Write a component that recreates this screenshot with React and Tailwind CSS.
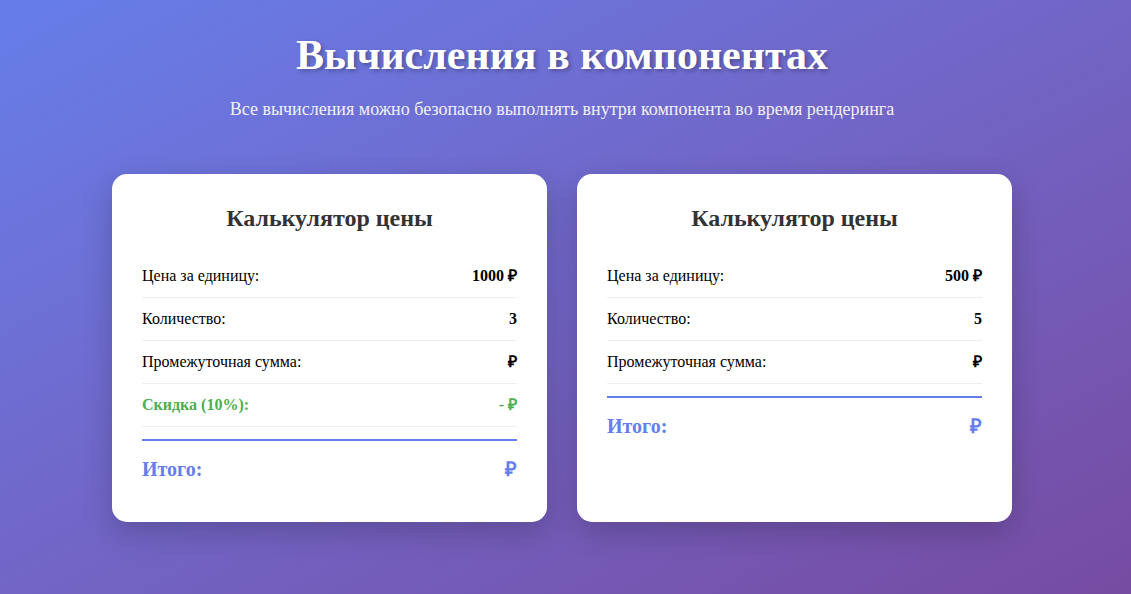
import React from 'react';

const calculators = [
  { id: 1, price: 1000, quantity: 3, discount: true },
  { id: 2, price: 500, quantity: 5, discount: false },
];

const Row = ({ label, value, green }) => (
  <div
    className={`flex justify-between items-center py-3 border-b border-[#eeeeee] text-base leading-[18px] ${
      green ? 'text-[#4caf50] font-bold' : 'text-black'
    }`}
  >
    <span>{label}</span>
    <span className="font-bold">{value}</span>
  </div>
);

const PriceCard = ({ calc }) => (
  <div className="bg-white rounded-[15px] p-[30px] shadow-[0_10px_30px_rgba(0,0,0,0.2)]">
    <h2 className="text-center text-[24px] leading-[28px] font-bold text-[#333333] mb-[23px]">
      Калькулятор цены
    </h2>

    {/* Rows */}
    <Row label="Цена за единицу:" value={`${calc.price} ₽`} />
    <Row label="Количество:" value={calc.quantity} />
    <Row label="Промежуточная сумма:" value=" ₽" />
    {calc.discount && <Row label="Скидка (10%):" value="- ₽" green />}

    {/* Total */}
    <div className="flex justify-between items-center mt-3 border-t-2 border-[#667eea] pt-[17px] pb-[11px] text-[20px] leading-[23px] font-bold text-[#667eea]">
      <span>Итого:</span>
      <span>₽</span>
    </div>
  </div>
);

const App = () => {
  return (
    <div className="min-h-screen bg-gradient-to-br from-[#667eea] to-[#764ba2] pr-[7px] font-['Liberation_Serif','Times_New_Roman',serif]">
      <div className="pt-[31px] text-center text-white">
        <h1 className="text-[42px] leading-[48px] font-bold [text-shadow:2px_2px_4px_rgba(0,0,0,0.3)]">
          Вычисления в компонентах
        </h1>
        <p className="mt-[20px] text-[18px] leading-[21px] opacity-90">
          Все вычисления можно безопасно выполнять внутри компонента во время рендеринга
        </p>
      </div>

      {/* Cards */}
      <div className="mx-auto mt-[54px] w-[900px] grid grid-cols-2 gap-[30px]">
        {calculators.map((calc) => (
          <PriceCard calc={calc} key={calc.id} />
        ))}
      </div>
    </div>
  );
};

export default App;
